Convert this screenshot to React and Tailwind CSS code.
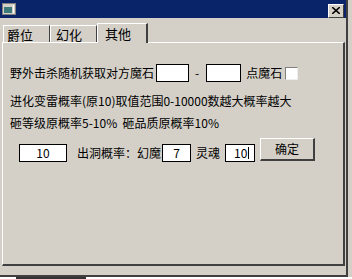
export default function App() {
  const font = { fontFamily: '"Noto Sans CJK SC", "Noto Sans", sans-serif' };
  return (
    <div className="w-[352px] h-[279px] bg-[#d4d0c8] flex flex-col overflow-hidden text-black" style={font}>
      <div className="flex flex-row h-[277px]">
        {/* window */}
        <div className="w-[348px] h-[277px] flex flex-col bg-[#d4d0c8] border-r-2 border-b-2 border-r-[#404040] border-b-[#404040]">
          {/* title bar */}
          <div className="h-[18px] bg-[#0a246a] flex items-center justify-between pl-[2px] pr-[2px]">
            <div className="w-[14px] h-[12px] bg-[#d4d0c8] border border-[#808080] flex items-end p-[1px]">
              <div className="w-[8px] h-[6px] bg-[#3a7a7a]" />
              <div className="w-[1px] h-[8px] bg-white ml-[1px]" />
            </div>
            <div className="w-[16px] h-[14px] bg-[#d4d0c8] border-t border-l border-t-white border-l-white border-r border-b border-r-[#404040] border-b-[#404040] flex items-center justify-center mt-[3px]">
              <svg width="8" height="7" viewBox="0 0 8 7">
                <path d="M0 0 L8 7 M8 0 L0 7" stroke="black" strokeWidth="1.6" />
              </svg>
            </div>
          </div>
          {/* body */}
          <div className="flex-1 flex flex-col pl-[2px] pr-[1px] pt-[4px] pb-[9px]">
            {/* tabs */}
            <div className="flex flex-row items-end h-[20px] text-[13px] leading-none">
              <div className="w-[47px] h-[17px] ml-[1px] border-t border-l border-t-white border-l-white border-r border-r-[#404040] flex items-center pl-[3px]">爵位</div>
              <div className="w-[47px] h-[17px] border-t border-l border-t-white border-l-white border-r border-r-[#404040] flex items-center pl-[5px]">幻化</div>
              <div className="w-[51px] h-[20px] border-t border-l border-t-white border-l-white border-r-2 border-r-[#404040] flex items-start pt-[3px] pl-[7px] -mb-[1px] bg-[#d4d0c8] relative">其他</div>
            </div>
            {/* panel */}
            <div className="flex-1 border-t border-l border-t-white border-l-white border-r-2 border-b-2 border-r-[#404040] border-b-[#404040] flex flex-col pl-[7px] pt-[21px] text-[12px] leading-[16px]">
              <div className="flex flex-row items-center h-[18px]">
                <span>野外击杀随机获取对方魔石</span>
                <div className="w-[33px] h-[18px] bg-white border border-black ml-[2px]" />
                <span className="ml-[6px] mr-[7px]">-</span>
                <div className="w-[35px] h-[18px] bg-white border border-black" />
                <span className="ml-[5px]">点魔石</span>
                <div className="w-[13px] h-[13px] ml-[3px] bg-white border-t border-l border-t-[#808080] border-l-[#808080] border-r border-b border-r-[#eeeeee] border-b-[#eeeeee]" />
              </div>
              <div className="mt-[11px] h-[16px]">进化变雷概率(原10)取值范围0-10000数越大概率越大</div>
              <div className="mt-[6px] h-[16px]">砸等级原概率5-10%&nbsp;&nbsp;砸品质原概率10%</div>
              <div className="mt-[7px] flex flex-row items-start">
                <div className="mt-[6px] ml-[9px] w-[48px] h-[18px] bg-white border border-black flex items-center justify-center">10</div>
                <span className="mt-[7px] ml-[10px]">出洞概率：幻魔</span>
                <div className="mt-[6px] ml-[1px] w-[29px] h-[18px] bg-white border border-black flex items-center justify-center">7</div>
                <span className="mt-[7px] ml-[5px]">灵魂</span>
                <div className="mt-[6px] ml-[5px] w-[30px] h-[18px] bg-white border border-black flex items-center pl-[8px]">10<span className="w-[1px] h-[12px] bg-black ml-[1px]" /></div>
                <button className="ml-[5px] w-[55px] h-[23px] bg-[#d4d0c8] border-t border-l border-t-white border-l-white border-r-2 border-b-2 border-r-[#404040] border-b-[#404040] text-[12px] flex items-center justify-center">确定</button>
              </div>
            </div>
          </div>
        </div>
        <div className="flex-1" />
      </div>
      <div className="h-[2px] bg-white flex flex-row">
        <div className="ml-[16px] w-[70px] h-[2px] bg-[#333333]" />
      </div>
    </div>
  );
}
